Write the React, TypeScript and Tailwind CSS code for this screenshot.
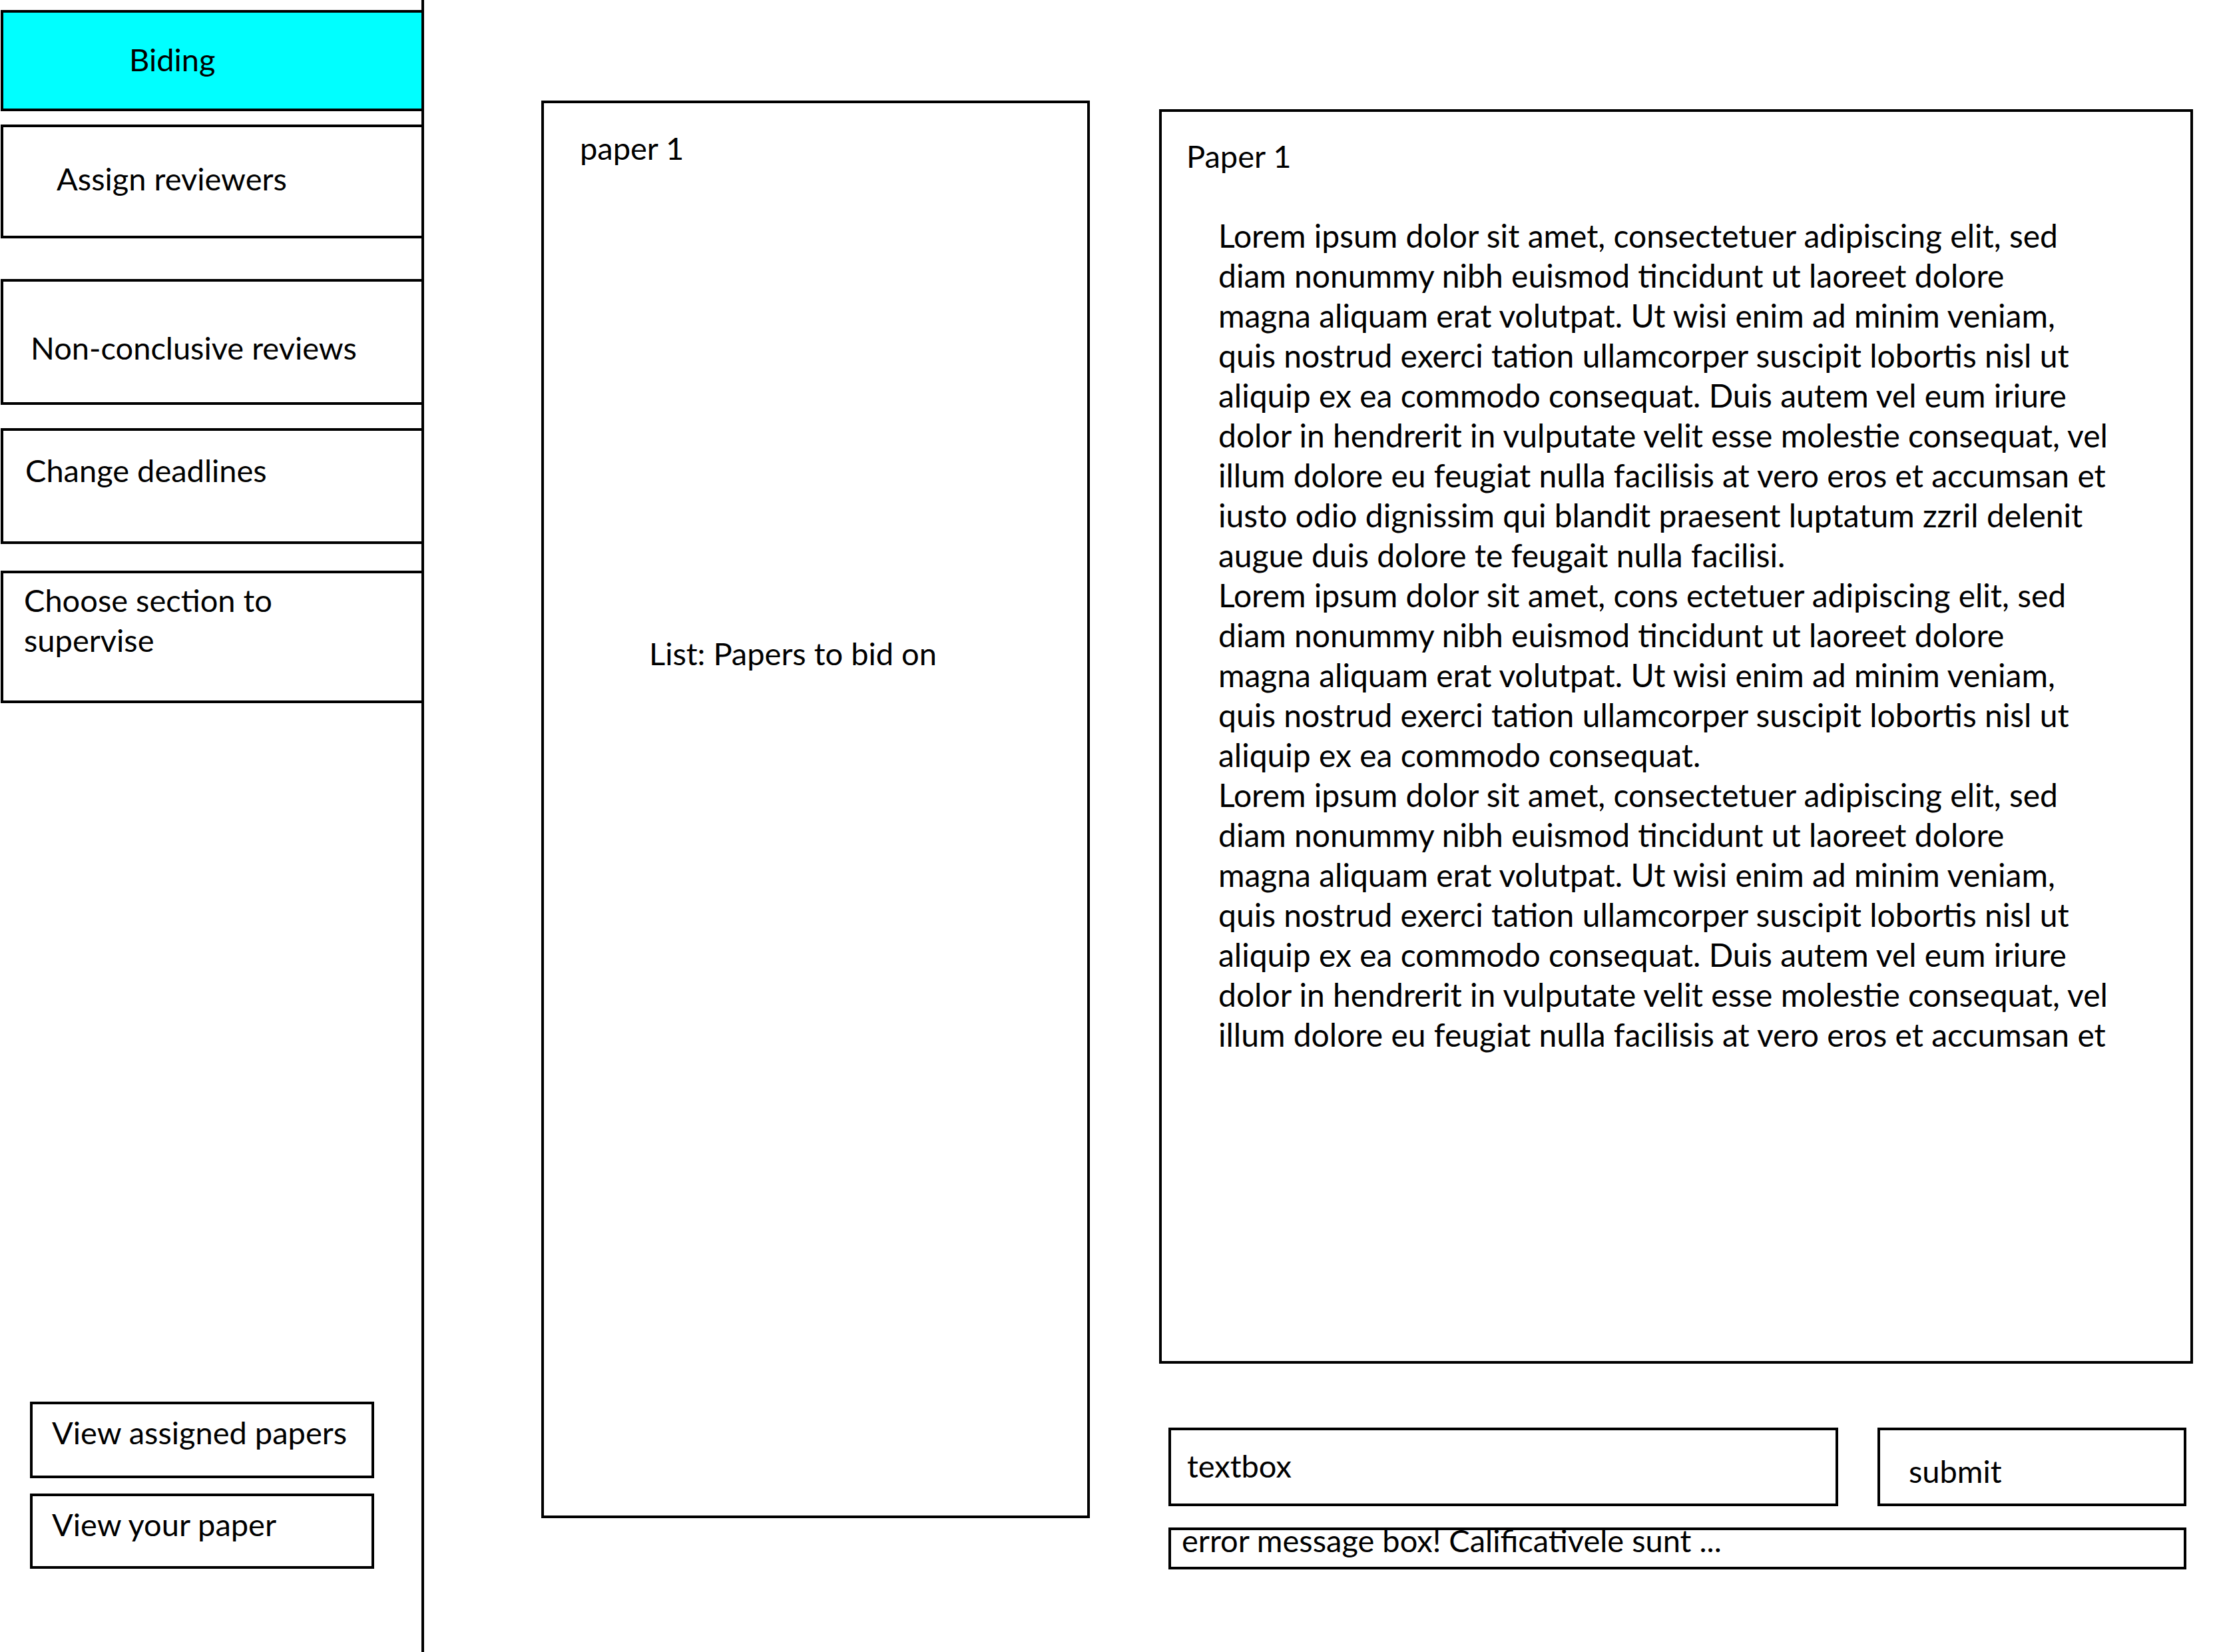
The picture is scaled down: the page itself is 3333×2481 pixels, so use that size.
import React from "react";

const lorem: string[] = [
  "Lorem ipsum dolor sit amet, consectetuer adipiscing elit, sed",
  "diam nonummy nibh euismod tincidunt ut laoreet dolore",
  "magna aliquam erat volutpat. Ut wisi enim ad minim veniam,",
  "quis nostrud exerci tation ullamcorper suscipit lobortis nisl ut",
  "aliquip ex ea commodo consequat. Duis autem vel eum iriure",
  "dolor in hendrerit in vulputate velit esse molestie consequat, vel",
  "illum dolore eu feugiat nulla facilisis at vero eros et accumsan et",
  "iusto odio dignissim qui blandit praesent luptatum zzril delenit",
  "augue duis dolore te feugait nulla facilisi.",
  "Lorem ipsum dolor sit amet, cons ectetuer adipiscing elit, sed",
  "diam nonummy nibh euismod tincidunt ut laoreet dolore",
  "magna aliquam erat volutpat. Ut wisi enim ad minim veniam,",
  "quis nostrud exerci tation ullamcorper suscipit lobortis nisl ut",
  "aliquip ex ea commodo consequat.",
  "Lorem ipsum dolor sit amet, consectetuer adipiscing elit, sed",
  "diam nonummy nibh euismod tincidunt ut laoreet dolore",
  "magna aliquam erat volutpat. Ut wisi enim ad minim veniam,",
  "quis nostrud exerci tation ullamcorper suscipit lobortis nisl ut",
  "aliquip ex ea commodo consequat. Duis autem vel eum iriure",
  "dolor in hendrerit in vulputate velit esse molestie consequat, vel",
  "illum dolore eu feugiat nulla facilisis at vero eros et accumsan et",
];

export default function App() {
  return (
    <div className="flex w-[3333px] h-[2481px] overflow-hidden bg-white text-black font-['Lato',sans-serif] text-[47px] leading-[60px]">
      {/* Sidebar */}
      <aside className="flex flex-col w-[637px] h-full shrink-0 border-r-4 border-black">
        <div className="mt-[15px] ml-[1px] w-[632px] h-[152px] border-4 border-r-0 border-black bg-[#00ffff] pt-[40px] pl-[189px] whitespace-nowrap">
          Biding
        </div>
        <div className="mt-[20px] ml-[1px] w-[632px] h-[171px] border-4 border-r-0 border-black pt-[47px] pl-[80px] whitespace-nowrap">
          Assign reviewers
        </div>
        <div className="mt-[61px] ml-[1px] w-[632px] h-[189px] border-4 border-r-0 border-black pt-[69px] pl-[41px] whitespace-nowrap">
          Non-conclusive reviews
        </div>
        <div className="mt-[35px] ml-[1px] w-[632px] h-[174px] border-4 border-r-0 border-black pt-[29px] pl-[33px] whitespace-nowrap">
          Change deadlines
        </div>
        <div className="mt-[40px] ml-[1px] w-[632px] h-[199px] border-4 border-r-0 border-black pt-[10px] pl-[31px]">
          <div>Choose section to</div>
          <div>supervise</div>
        </div>

        <div className="mt-auto mb-[125px] ml-[45px] flex flex-col gap-[23px]">
          <div className="w-[517px] h-[115px] border-4 border-black pt-[12px] pl-[29px] whitespace-nowrap">
            View assigned papers
          </div>
          <div className="w-[517px] h-[113px] border-4 border-black pt-[12px] pl-[29px] whitespace-nowrap">
            View your paper
          </div>
        </div>
      </aside>

      {/* Middle list */}
      <section className="ml-[176px] mt-[151px] w-[824px] h-[2129px] shrink-0 border-4 border-black pt-[37px]">
        <div className="pl-[54px] whitespace-nowrap">paper 1</div>
        <div className="mt-[699px] pl-[158px] whitespace-nowrap">List: Papers to bid on</div>
      </section>

      {/* Right column */}
      <div className="ml-[104px] flex flex-col w-[1553px] shrink-0">
        <div className="mt-[164px] h-[1884px] border-4 border-black pt-[36px]">
          <div className="pl-[37px] whitespace-nowrap">Paper 1</div>
          <div className="mt-[60px] pl-[85px] text-[48px] leading-[60px]">
            {lorem.map((l, i) => (
              <div key={i} className="whitespace-nowrap">
                {l}
              </div>
            ))}
          </div>
        </div>

        <div className="mt-[96px] ml-[14px] flex gap-[59px]">
          <div className="w-[1006px] h-[118px] border-4 border-black pt-[23px] pl-[24px] whitespace-nowrap">
            textbox
          </div>
          <div className="w-[464px] h-[118px] border-4 border-black pt-[31px] pl-[43px] whitespace-nowrap">
            submit
          </div>
        </div>

        <div className="mt-[32px] ml-[14px] w-[1529px] h-[63px] border-4 border-black pl-[16px] leading-[30px] whitespace-nowrap">
          error message box! Calificativele sunt ...
        </div>
      </div>
    </div>
  );
}
